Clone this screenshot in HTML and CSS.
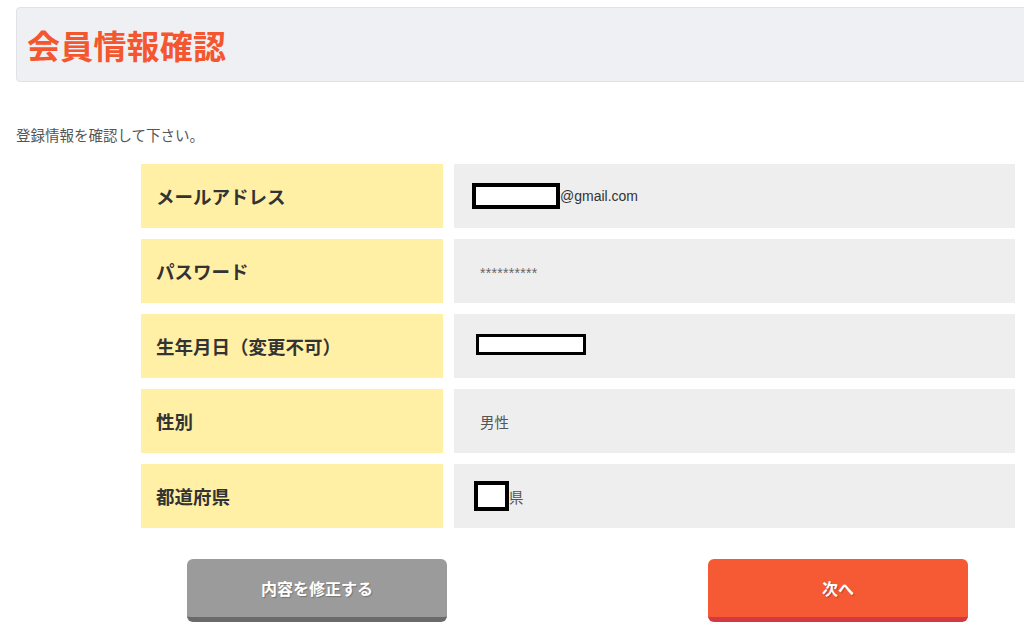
FILE: index.html
```html
<!DOCTYPE html>
<html lang="ja">
<head>
<meta charset="utf-8">
<title>会員情報確認</title>
<link rel="stylesheet" href="styles.css">
</head>
<body>
<div class="page">
  <header class="head">
    <h1 class="title">会員情報確認</h1>
  </header>
  <p class="intro">登録情報を確認して下さい。</p>
  <div class="table">
    <div class="row">
      <div class="label">メールアドレス</div>
      <div class="value email"><span class="mask mask-email"></span><span class="latin">@gmail.com</span></div>
    </div>
    <div class="row">
      <div class="label">パスワード</div>
      <div class="value"><span class="stars">**********</span></div>
    </div>
    <div class="row">
      <div class="label">生年月日（変更不可）</div>
      <div class="value birth"><span class="mask mask-birth"></span></div>
    </div>
    <div class="row">
      <div class="label">性別</div>
      <div class="value"><span class="text">男性</span></div>
    </div>
    <div class="row">
      <div class="label">都道府県</div>
      <div class="value pref"><span class="mask mask-pref"></span><span class="text">県</span></div>
    </div>
  </div>
  <div class="actions">
    <button class="btn btn-gray">内容を修正する</button>
    <button class="btn btn-orange">次へ</button>
  </div>
</div>
</body>
</html>
```
FILE: styles.css
```css
html, body {
  margin: 0;
  padding: 0;
  background: #ffffff;
  overflow: hidden;
}
body {
  font-family: "Noto Sans CJK JP", "Liberation Sans", sans-serif;
  color: #333333;
}
.page {
  padding: 7px 0 20px 16px;
}
.head {
  box-sizing: border-box;
  height: 75px;
  margin-right: -40px;
  background: #eff0f4;
  border: 1px solid #e1e2e6;
  border-radius: 4px;
  display: flex;
  align-items: center;
  padding-left: 10px;
}
.title {
  margin: 0;
  font-size: 33px;
  line-height: 40px;
  font-weight: 700;
  color: #f4572f;
  letter-spacing: 0.2px;
}
.intro {
  margin: 43px 0 0 0;
  font-size: 14.5px;
  line-height: 20px;
  color: #555555;
}
.table {
  margin: 19px 0 0 125px;
  width: 874px;
  display: flex;
  flex-direction: column;
  gap: 11px;
}
.row {
  display: flex;
  gap: 11px;
  height: 64px;
}
.label {
  width: 302px;
  flex: none;
  box-sizing: border-box;
  background: #fff0a6;
  display: flex;
  align-items: center;
  padding-left: 15px;
  font-size: 18.5px;
  font-weight: 700;
  color: #333333;
}
.value {
  flex: 1;
  box-sizing: border-box;
  background: #eeeeee;
  display: flex;
  align-items: center;
  padding-left: 26px;
  font-size: 14px;
  color: #555555;
}
.value.email { padding-left: 18px; }
.value.birth { padding-left: 22px; }
.value.pref { padding-left: 20px; }
.mask {
  box-sizing: border-box;
  background: #ffffff;
  border: 3px solid #000000;
  flex: none;
}
.mask-email { width: 88px; height: 26px; border-width: 4px; }
.mask-birth { width: 110px; height: 21px; margin-top: -3px; }
.mask-pref { width: 35px; height: 30px; border-width: 4px; }
.latin {
  font-family: "Liberation Sans", Arial, sans-serif;
  font-size: 14px;
  color: #333333;
}
.stars {
  font-family: "Liberation Sans", Arial, sans-serif;
  font-size: 14px;
  color: #666666;
  letter-spacing: 0.3px;
  margin-top: 4px;
}
.text {
  font-size: 14.5px;
  color: #555555;
}
.actions {
  margin: 31px 0 0 171px;
  width: 781px;
  display: flex;
  justify-content: space-between;
}
.btn {
  box-sizing: border-box;
  width: 260px;
  height: 63px;
  border: none;
  border-radius: 6px;
  font-family: "Noto Sans CJK JP", "Liberation Sans", sans-serif;
  font-size: 16px;
  font-weight: 700;
  color: #ffffff;
  text-shadow: 1px 1px 1px rgba(0, 0, 0, 0.25);
  padding: 0;
  cursor: pointer;
}
.btn-gray {
  background: #9b9b9b;
  border-bottom: 5px solid #6a6a6a;
}
.btn-orange {
  background: #f55a35;
  border-bottom: 5px solid #d3393f;
}
```
